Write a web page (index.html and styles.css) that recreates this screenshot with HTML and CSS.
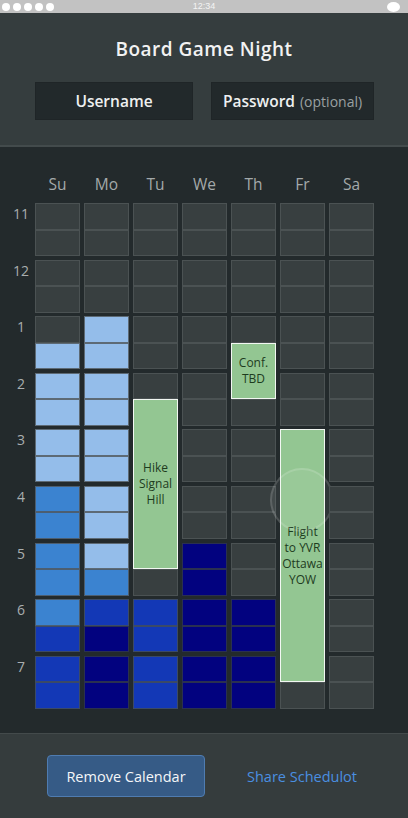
FILE: index.html
```html
<!DOCTYPE html>
<html>
<head>
<meta charset="utf-8">
<title>Board Game Night</title>
<link rel="stylesheet" href="styles.css">
</head>
<body>
<div class="status">
  <div class="dots"><span></span><span></span><span></span><span></span><span></span></div>
  <div class="time">12:34</div>
  <div class="batt"></div>
</div>
<header class="header">
  <h1 class="title">Board Game Night</h1>
  <div class="inputs">
    <div class="field user">Username</div>
    <div class="field pass">Password <span class="opt">(optional)</span></div>
  </div>
</header>
<main class="cal">
  <div class="days">
    <span></span><span>Su</span><span>Mo</span><span>Tu</span><span>We</span><span>Th</span><span>Fr</span><span>Sa</span>
  </div>
  <div class="grid">
    <div class="hours">
      <div class="hl">11</div><div class="hl">12</div><div class="hl">1</div><div class="hl">2</div><div class="hl">3</div><div class="hl">4</div><div class="hl">5</div><div class="hl">6</div><div class="hl">7</div>
    </div>
    <!-- Su -->
    <div class="col">
      <div class="hr"><div class="h"></div><div class="h"></div></div>
      <div class="hr"><div class="h"></div><div class="h"></div></div>
      <div class="hr"><div class="h"></div><div class="h l"></div></div>
      <div class="hr"><div class="h l"></div><div class="h l"></div></div>
      <div class="hr"><div class="h l"></div><div class="h l"></div></div>
      <div class="hr"><div class="h m"></div><div class="h m"></div></div>
      <div class="hr"><div class="h m"></div><div class="h m"></div></div>
      <div class="hr"><div class="h m"></div><div class="h d"></div></div>
      <div class="hr"><div class="h d"></div><div class="h d"></div></div>
    </div>
    <!-- Mo -->
    <div class="col">
      <div class="hr"><div class="h"></div><div class="h"></div></div>
      <div class="hr"><div class="h"></div><div class="h"></div></div>
      <div class="hr"><div class="h l"></div><div class="h l"></div></div>
      <div class="hr"><div class="h l"></div><div class="h l"></div></div>
      <div class="hr"><div class="h l"></div><div class="h l"></div></div>
      <div class="hr"><div class="h l"></div><div class="h l"></div></div>
      <div class="hr"><div class="h l"></div><div class="h m"></div></div>
      <div class="hr"><div class="h d"></div><div class="h n"></div></div>
      <div class="hr"><div class="h n"></div><div class="h n"></div></div>
    </div>
    <!-- Tu -->
    <div class="col">
      <div class="hr"><div class="h"></div><div class="h"></div></div>
      <div class="hr"><div class="h"></div><div class="h"></div></div>
      <div class="hr"><div class="h"></div><div class="h"></div></div>
      <div class="hr"><div class="h"></div><div class="h"></div></div>
      <div class="hr"><div class="h"></div><div class="h"></div></div>
      <div class="hr"><div class="h"></div><div class="h"></div></div>
      <div class="hr"><div class="h"></div><div class="h"></div></div>
      <div class="hr"><div class="h d"></div><div class="h d"></div></div>
      <div class="hr"><div class="h d"></div><div class="h d"></div></div>
      <div class="ev ev-hike"><span>Hike<br>Signal<br>Hill</span></div>
    </div>
    <!-- We -->
    <div class="col">
      <div class="hr"><div class="h"></div><div class="h"></div></div>
      <div class="hr"><div class="h"></div><div class="h"></div></div>
      <div class="hr"><div class="h"></div><div class="h"></div></div>
      <div class="hr"><div class="h"></div><div class="h"></div></div>
      <div class="hr"><div class="h"></div><div class="h"></div></div>
      <div class="hr"><div class="h"></div><div class="h"></div></div>
      <div class="hr"><div class="h n"></div><div class="h n"></div></div>
      <div class="hr"><div class="h n"></div><div class="h n"></div></div>
      <div class="hr"><div class="h n"></div><div class="h n"></div></div>
    </div>
    <!-- Th -->
    <div class="col">
      <div class="hr"><div class="h"></div><div class="h"></div></div>
      <div class="hr"><div class="h"></div><div class="h"></div></div>
      <div class="hr"><div class="h"></div><div class="h"></div></div>
      <div class="hr"><div class="h"></div><div class="h"></div></div>
      <div class="hr"><div class="h"></div><div class="h"></div></div>
      <div class="hr"><div class="h"></div><div class="h"></div></div>
      <div class="hr"><div class="h"></div><div class="h"></div></div>
      <div class="hr"><div class="h n"></div><div class="h n"></div></div>
      <div class="hr"><div class="h n"></div><div class="h n"></div></div>
      <div class="ev ev-conf"><span>Conf.<br>TBD</span></div>
    </div>
    <!-- Fr -->
    <div class="col">
      <div class="hr"><div class="h"></div><div class="h"></div></div>
      <div class="hr"><div class="h"></div><div class="h"></div></div>
      <div class="hr"><div class="h"></div><div class="h"></div></div>
      <div class="hr"><div class="h"></div><div class="h"></div></div>
      <div class="hr"><div class="h"></div><div class="h"></div></div>
      <div class="hr"><div class="h"></div><div class="h"></div></div>
      <div class="hr"><div class="h"></div><div class="h"></div></div>
      <div class="hr"><div class="h"></div><div class="h"></div></div>
      <div class="hr"><div class="h"></div><div class="h"></div></div>
      <div class="ev ev-flight"><span>Flight<br>to YVR<br>Ottawa<br>YOW</span></div>
      <div class="touch"></div>
    </div>
    <!-- Sa -->
    <div class="col">
      <div class="hr"><div class="h"></div><div class="h"></div></div>
      <div class="hr"><div class="h"></div><div class="h"></div></div>
      <div class="hr"><div class="h"></div><div class="h"></div></div>
      <div class="hr"><div class="h"></div><div class="h"></div></div>
      <div class="hr"><div class="h"></div><div class="h"></div></div>
      <div class="hr"><div class="h"></div><div class="h"></div></div>
      <div class="hr"><div class="h"></div><div class="h"></div></div>
      <div class="hr"><div class="h"></div><div class="h"></div></div>
      <div class="hr"><div class="h"></div><div class="h"></div></div>
    </div>
  </div>
</main>
<footer class="footer">
  <button class="btn">Remove Calendar</button>
  <a class="share" href="#">Share Schedulot</a>
</footer>
</body>
</html>
```

FILE: styles.css
```css
* { box-sizing: border-box; }
html, body { margin: 0; padding: 0; }
body {
  width: 408px;
  height: 818px;
  overflow: hidden;
  background: #232a2c;
  font-family: "Open Sans", "Noto Sans", sans-serif;
  --pitch: 56.6px;
  --half: 26.5px;
}

.status {
  height: 13px;
  background: #c2c2c2;
  display: flex;
  align-items: center;
  justify-content: space-between;
  padding: 0 8px 0 2px;
  position: relative;
}
.dots { display: flex; gap: 3px; }
.dots span {
  width: 8px; height: 8px; border-radius: 50%;
  background: #fff;
}
.time {
  position: absolute;
  left: 0; right: 0;
  text-align: center;
  color: #f4f4f4;
  font-size: 9px;
  line-height: 13px;
  font-family: "Liberation Sans", sans-serif;
}
.batt {
  width: 13px; height: 10px; border-radius: 50%;
  background: #fff;
}

.header {
  height: 134px;
  background: #353d3e;
  border-bottom: 2px solid #434b4c;
  padding-top: 22px;
}
.title {
  margin: 0;
  text-align: center;
  color: #f2f2f2;
  font-size: 19px;
  font-weight: 600;
  letter-spacing: 0.5px;
  line-height: 28px;
}
.inputs {
  display: flex;
  gap: 18px;
  padding-left: 35px;
  margin-top: 19px;
}
.field {
  height: 38px;
  background: #22292b;
  border: 1px solid #1f2527;
  color: #eef0f0;
  font-size: 15.5px;
  font-weight: 600;
  display: flex;
  align-items: center;
  justify-content: center;
  gap: 5px;
}
.user { width: 158px; }
.pass { width: 163px; }
.opt { color: #9aa0a1; font-weight: 400; font-size: 14px; }

.cal {
  height: 586px;
  padding-top: 26px;
}
.days {
  display: grid;
  grid-template-columns: 31px repeat(7, 45px);
  column-gap: 4px;
  height: 30px;
}
.days span {
  text-align: center;
  color: #a3a9aa;
  font-size: 15.5px;
  line-height: 22px;
}
.grid {
  display: grid;
  grid-template-columns: 31px repeat(7, 45px);
  column-gap: 4px;
}
.hours {
  display: flex;
  flex-direction: column;
  gap: 3.6px;
  padding-left: 11px;
}
.hl {
  height: 53px;
  text-align: center;
  color: #a9aeaf;
  font-size: 14px;
  line-height: 20px;
  padding-top: 1px;
}
.col {
  position: relative;
  display: flex;
  flex-direction: column;
  gap: 3.6px;
}
.hr {
  height: 53px;
  display: flex;
  flex-direction: column;
}
.h {
  flex: 1;
  background: #383f40;
  border: 1px solid #4b5253;
}
.h.l { background: #94bdea; border-color: #5d6a75; }
.h.m { background: #3b83d0; border-color: #4c5e70; }
.h.d { background: #1338b6; border-color: #3b4a66; }
.h.n { background: #02027f; border-color: #2a3050; }

.ev {
  position: absolute;
  left: 0; right: 0;
  background: #93c692;
  border: 1px solid #f2f7f2;
  color: #1e3c1e;
  font-size: 12px;
  line-height: 16px;
  text-align: center;
  display: flex;
  align-items: center;
  justify-content: center;
}
.ev-hike { top: calc(var(--pitch) * 3 + var(--half)); height: calc(var(--pitch) * 3); }
.ev-conf { top: calc(var(--pitch) * 2 + var(--half)); height: var(--pitch); }
.ev-flight { top: calc(var(--pitch) * 4); height: calc(var(--pitch) * 4 + var(--half)); }

.touch {
  position: absolute;
  width: 64px; height: 64px;
  left: -10px;
  top: 265px;
  border-radius: 50%;
  background: rgba(255,255,255,0.06);
  border: 2px solid rgba(255,255,255,0.14);
}

.footer {
  height: 85px;
  background: #353c3d;
  border-top: 1px solid #434a4b;
  display: flex;
  align-items: center;
  padding-left: 47px;
  gap: 42px;
}
.btn {
  width: 158px;
  height: 42px;
  background: #365b86;
  border: 1px solid #4f7cb1;
  border-radius: 4px;
  color: #f4f6f8;
  font-family: "Open Sans", "Noto Sans", sans-serif;
  font-size: 14.5px;
}
.share {
  color: #4a8fe1;
  text-decoration: none;
  font-size: 14.5px;
}
```
